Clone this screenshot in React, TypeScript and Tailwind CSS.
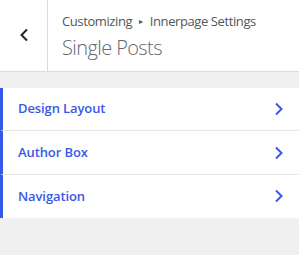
const Chevron = ({ dir, className }: { dir: 'left' | 'right'; className?: string }) => (
  <svg width="10" height="14" viewBox="0 0 10 14" fill="none" stroke="currentColor" strokeWidth="2" className={className} aria-hidden="true">
    {dir === 'left' ? <path d="M8 1.5 2.5 7 8 12.5" /> : <path d="M2 1.5 7.5 7 2 12.5" />}
  </svg>
)

const items = ['Design Layout', 'Author Box', 'Navigation']

export default function App() {
  return (
    <div className="h-[255px] w-[299px] overflow-hidden bg-[#f0f0f1] font-['Open_Sans','Noto_Sans',sans-serif]">
      <header className="flex h-[72px] border-b border-[#dcdcde] bg-white">
        <button type="button" className="flex w-[48px] shrink-0 items-center justify-center border-r border-[#dcdcde] pb-[2px] text-[#1d2327]">
          <Chevron dir="left" />
        </button>
        <div className="flex flex-col pl-[14px] pt-[12px]">
          <span className="flex items-center whitespace-nowrap text-[13px] leading-[18px] tracking-[-0.4px] text-[#50575e]">
            Customizing
            <span className="mx-[7px] text-[8px]">▸</span>
            Innerpage Settings
          </span>
          <h1 className="mt-[5px] text-[20px] font-light leading-[26px] tracking-[-0.6px] text-[#646970]">Single Posts</h1>
        </div>
      </header>

      <ul className="mt-[16px] bg-white">
        {items.map((item, i) => (
          <li
            key={item}
            className={`flex h-[43.4px] items-center justify-between border-l-[3px] border-[#3858e9] pl-[15px] pr-[15px] ${i < items.length - 1 ? 'border-b border-b-[#e8e8e8]' : ''}`}
          >
            <span className="text-[13px] font-semibold tracking-[-0.1px] text-[#3858e9]">{item}</span>
            <Chevron dir="right" className="text-[#3858e9]" />
          </li>
        ))}
      </ul>
    </div>
  )
}
